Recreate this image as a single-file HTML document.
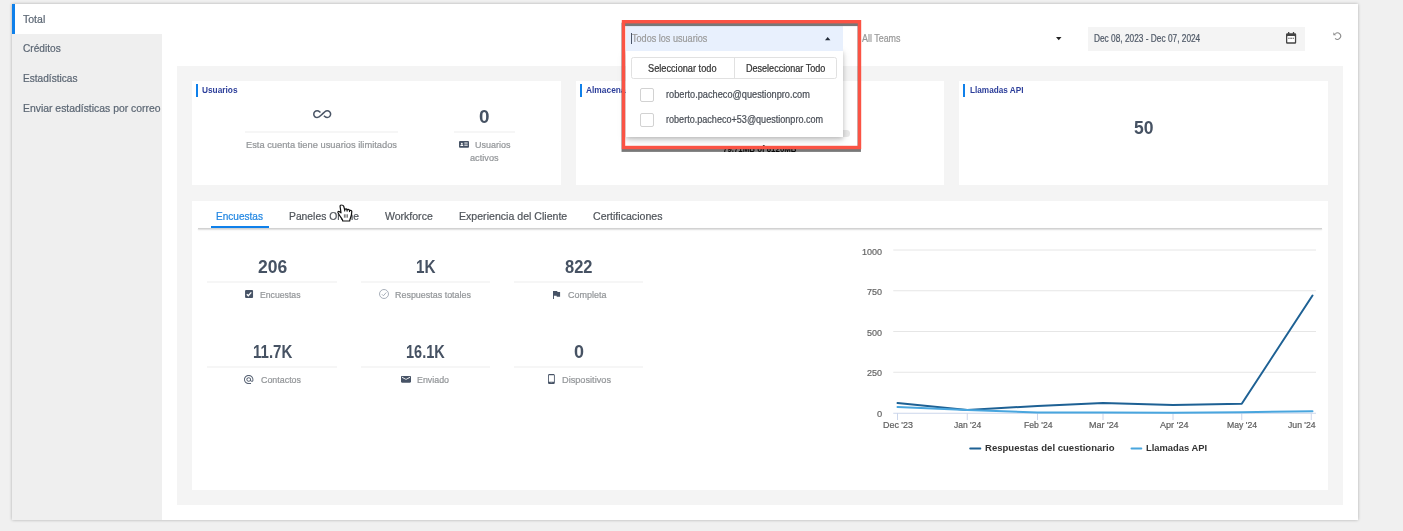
<!DOCTYPE html>
<html lang="es"><head><meta charset="utf-8"><title>Uso</title>
<style>
*{margin:0;padding:0;box-sizing:border-box}
html,body{width:1403px;height:531px;overflow:hidden;background:#f0f0f0;font-family:"Liberation Sans",sans-serif}
.a{position:absolute}
.t{position:absolute;white-space:nowrap;transform-origin:0 50%;display:block;-webkit-text-stroke:.22px currentColor}
#panel{left:12px;top:4px;width:1346px;height:516px;background:#fff;box-shadow:0 0 3px rgba(0,0,0,.28)}
#side{left:12px;top:34px;width:149.6px;height:486px;background:#efefef}
#sel{left:12px;top:4px;width:3px;height:30px;background:#0f80ea}
#content{left:177px;top:66px;width:1166px;height:439px;background:#f4f4f4}
.card{background:#fff}
.bar{width:2px;height:13px;background:#0f80ea;top:84px}
.dv{height:2px;background:#f6f6f6}
svg{position:absolute;overflow:visible}
</style></head><body>
<div class="a" id="panel"></div>
<div class="a" id="side"></div>
<div class="a" id="sel"></div>
<div class="a" id="content"></div>
<div class="a card" style="left:192px;top:80.5px;width:368.5px;height:104.5px"></div>
<div class="a card" style="left:575.75px;top:80.5px;width:368px;height:104.5px"></div>
<div class="a card" style="left:959.25px;top:80.5px;width:368.75px;height:104.5px"></div>
<div class="a card" style="left:192px;top:200.5px;width:1136px;height:289.5px"></div>
<div class="a bar" style="left:195.5px"></div>
<div class="a bar" style="left:579.5px"></div>
<div class="a bar" style="left:962.5px"></div>

<!-- users card -->
<div class="a dv" style="left:245px;top:131px;width:153px"></div>
<div class="a dv" style="left:453.5px;top:131px;width:61px"></div>
<!-- storage progress (mostly hidden) -->
<div class="a" style="left:670px;top:130px;width:179.5px;height:7px;border-radius:4px;background:#e9e9e9"></div>

<!-- tabs -->
<div class="a" style="left:197.5px;top:228px;width:1124.5px;height:1px;background:#d2d2d2;box-shadow:0 1px 1.5px rgba(0,0,0,.18)"></div>
<div class="a" style="left:210.75px;top:226.25px;width:58px;height:1.9px;background:#0f80ea"></div>

<!-- stat dividers -->
<div class="a dv" style="left:207px;top:281px;width:130px"></div>
<div class="a dv" style="left:360.5px;top:281px;width:129.5px"></div>
<div class="a dv" style="left:513.75px;top:281px;width:129.5px"></div>
<div class="a dv" style="left:207px;top:366px;width:130px"></div>
<div class="a dv" style="left:360.5px;top:366px;width:129.5px"></div>
<div class="a dv" style="left:513.75px;top:366px;width:129.5px"></div>

<!-- date input -->
<div class="a" style="left:1087.5px;top:26.75px;width:217.5px;height:24px;background:#f4f4f4"></div>

<!-- chart -->
<svg class="a" style="left:0;top:0" width="1403" height="531" viewBox="0 0 1403 531">
 <g stroke="#e6e6e6" stroke-width="1" fill="none">
  <path d="M893.25 250H1316M893.25 290.75H1316M893.25 331.5H1316M893.25 372.25H1316"/>
 </g>
 <path d="M893.25 413.25H1316" stroke="#ccd6eb" stroke-width="1" fill="none"/>
 <path d="M897.5 413v7M967.25 413v7M1037.5 413v7M1103 413v7M1173 413v7M1241.75 413v7M1311.25 413v7" stroke="#ccd6eb" stroke-width="1" fill="none"/>
 <path d="M897.5 403L967.25 410L1037.5 406L1103 403L1173 405L1241.75 403.75L1312.5 295.5" stroke="#1e6194" stroke-width="2" fill="none" stroke-linejoin="round" stroke-linecap="round"/>
 <path d="M897.5 407L967.25 410L1037.5 412.4L1103 412.5L1173 412.75L1241.75 412.25L1312.5 411.25" stroke="#49a6de" stroke-width="2" fill="none" stroke-linejoin="round" stroke-linecap="round"/>
 <path d="M970.2 448.400H980.300" stroke="#1e6194" stroke-width="2" stroke-linecap="round"/>
 <path d="M1131.500 448.400H1141.300" stroke="#49a6de" stroke-width="2" stroke-linecap="round"/>
</svg>

<!--ICONS_START-->
<!-- infinity -->
<svg style="left:312.9px;top:109.9px" width="18.4" height="8.25" viewBox="0 6.62 24 10.76" preserveAspectRatio="none"><path fill="#4a5566" d="M18.6 6.62c-1.44 0-2.8.56-3.77 1.53L12 10.66 10.48 12h.01L7.8 14.39c-.64.64-1.49.99-2.4.99-1.87 0-3.39-1.51-3.39-3.38S3.53 8.62 5.4 8.62c.91 0 1.76.35 2.44 1.03l1.13 1 1.51-1.34L9.22 8.2C8.2 7.18 6.84 6.62 5.4 6.62 2.42 6.62 0 9.04 0 12s2.42 5.38 5.4 5.38c1.44 0 2.8-.56 3.77-1.53l2.83-2.5.01.01L13.52 12h-.01l2.69-2.39c.64-.64 1.49-.99 2.4-.99 1.87 0 3.39 1.51 3.39 3.38s-1.52 3.38-3.39 3.38c-.9 0-1.76-.35-2.44-1.03l-1.14-1.01-1.51 1.34 1.27 1.12c1.02 1.01 2.37 1.57 3.82 1.57 2.98 0 5.4-2.41 5.4-5.38s-2.42-5.37-5.4-5.37z"/></svg>
<!-- id card -->
<svg style="left:458.8px;top:140.9px" width="10" height="6.7" viewBox="0 0 30 20"><rect x="0" y="0" width="30" height="20" rx="3" fill="#475366"/><circle cx="8.5" cy="7.5" r="2.6" fill="#fff"/><path d="M4 15c0-3 2-4.5 4.500-4.500S13 12 13 15z" fill="#fff"/><rect x="16" y="4.500" width="10" height="3" fill="#fff"/><rect x="16" y="11" width="10" height="3" fill="#fff"/></svg>
<!-- checkbox -->
<svg style="left:244.8px;top:290px" width="8.1" height="8" viewBox="0 0 16 16"><rect width="16" height="16" rx="2" fill="#475366"/><path d="M3.500 8.500l3 3L12.500 4.800" stroke="#fff" stroke-width="2.600" fill="none"/></svg>
<!-- circle check -->
<svg style="left:379.1px;top:289.1px" width="10" height="10" viewBox="0 0 20 20"><circle cx="10" cy="10" r="9" fill="none" stroke="#98a1ae" stroke-width="1.700"/><path d="M5.800 10.500l3 3L14.500 7" stroke="#98a1ae" stroke-width="1.700" fill="none"/></svg>
<!-- flag -->
<svg style="left:552.9px;top:290.9px" width="7.100" height="8" viewBox="5 4 15 17" preserveAspectRatio="none"><path fill="#475366" d="M14.400 6L14 4H5v17h2v-7h5.600l.4 2h7V6z"/></svg>
<!-- at -->
<svg style="left:244.4px;top:375px" width="9.400" height="9" viewBox="2 2 20 20" preserveAspectRatio="none"><path fill="#596475" d="M12 2C6.480 2 2 6.480 2 12s4.480 10 10 10h5v-2h-5c-4.340 0-8-3.660-8-8s3.660-8 8-8 8 3.660 8 8v1.430c0 .79-.71 1.570-1.500 1.570s-1.500-.78-1.500-1.570V12c0-2.760-2.240-5-5-5s-5 2.240-5 5 2.240 5 5 5c1.380 0 2.640-.56 3.540-1.470.65.890 1.770 1.470 2.960 1.470 1.970 0 3.500-1.600 3.500-3.570V12c0-5.520-4.480-10-10-10zm0 13c-1.660 0-3-1.340-3-3s1.340-3 3-3 3 1.340 3 3-1.340 3-3 3z"/></svg>
<!-- envelope -->
<svg style="left:401.3px;top:375.6px" width="10" height="6.700" viewBox="2 4 20 16" preserveAspectRatio="none"><path fill="#475366" d="M20 4H4c-1.100 0-1.990.9-1.990 2L2 18c0 1.100.9 2 2 2h16c1.100 0 2-.9 2-2V6c0-1.100-.9-2-2-2zm0 4l-8 5-8-5V6l8 5 8-5v2z"/></svg>
<!-- phone -->
<svg style="left:547.7px;top:374px" width="6.800" height="10" viewBox="5 1 14 22" preserveAspectRatio="none"><path fill="#475366" d="M16 1H8C6.340 1 5 2.340 5 4v16c0 1.660 1.340 3 3 3h8c1.660 0 3-1.340 3-3V4c0-1.660-1.340-3-3-3zm-2 20h-4v-1h4v1zm3.250-3H6.750V4h10.500v14z"/></svg>
<!-- calendar -->
<svg style="left:1285.9px;top:32.2px" width="10.200" height="11.800" viewBox="0 0 20 23"><path fill="#444" d="M4 0h2.500v2.500h7V0H16v2.500h1.500A2.500 2.500 0 0 1 20 5v15.500a2.500 2.500 0 0 1-2.500 2.500h-15A2.500 2.500 0 0 1 0 20.500V5a2.500 2.500 0 0 1 2.500-2.500H4z"/><rect x="2.500" y="8" width="15" height="12" rx="1" fill="#fff"/><path d="M4.500 12h2.500M8.500 12h3M13 12h2.500" stroke="#444" stroke-width="2"/></svg>
<!-- reset -->
<svg style="left:0;top:0" width="1403" height="531" viewBox="0 0 1403 531"><path d="M1335.300 33.700A3.200 3.200 0 1 1 1335.100 38.300" fill="none" stroke="#8c8c8c" stroke-width="1.100"/><path d="M1333.300 32.300V35.300H1336.200z" fill="#909090"/></svg>
<!-- hand cursor -->
<svg style="left:0;top:0;z-index:5" width="1403" height="531" viewBox="0 0 1403 531"><path d="M341.500 205C340.500 204.900 340 205.700 340.100 206.600L341 212.900L339.600 211.700C338.800 211.100 337.700 211.400 337.900 212.400C338.200 213.500 340.400 216.600 342.500 219.800L342.700 221H349.700L349.900 219.700C350.900 217.600 351.800 214.500 351.800 211.600C351.800 210.200 350 209.900 349.500 210.900V210.300C349.300 209 347.300 209 347.100 210.200V209.900C346.800 208.600 344.900 208.700 344.700 209.900L343.700 206.200C343.400 205.300 342.500 205 341.500 205Z" fill="#fff" stroke="#111" stroke-width="1.200" stroke-linejoin="round"/><path d="M344.700 209.900v1.600M347.100 210.200v1.500M349.500 210.800v1.300" stroke="#111" stroke-width="1" fill="none"/><path d="M344.400 214.300v3.400M345.900 214.300v3.400M347.400 214.300v3.400" stroke="#222" stroke-width=".65" fill="none"/></svg>
<!--ICONS_END-->

<span id="t0" class="t" style="left:23px;top:13.00px;font-size:11.5px;line-height:13.8px;color:#5b6673;font-weight:400;transform:scaleX(0.9158);">Total</span>
<span id="t1" class="t" style="left:23px;top:42.00px;font-size:11.5px;line-height:13.8px;color:#5b6673;font-weight:400;transform:scaleX(0.8814);">Créditos</span>
<span id="t2" class="t" style="left:23px;top:72.00px;font-size:11.5px;line-height:13.8px;color:#5b6673;font-weight:400;transform:scaleX(0.8790);">Estadísticas</span>
<span id="t3" class="t" style="left:23px;top:102.00px;font-size:11.5px;line-height:13.8px;color:#5b6673;font-weight:400;transform:scaleX(0.9039);">Enviar estadísticas por correo</span>
<span id="t4" class="t" style="left:202px;top:84.00px;font-size:9.5px;line-height:11.4px;color:#2c3e9a;font-weight:700;transform:scaleX(0.8732);-webkit-text-stroke:0;">Usuarios</span>
<span id="t5" class="t" style="left:586px;top:84.00px;font-size:9.5px;line-height:11.4px;color:#2c3e9a;font-weight:700;transform:scaleX(0.8812);-webkit-text-stroke:0;">Almacenamiento</span>
<span id="t6" class="t" style="left:970px;top:84.00px;font-size:9.5px;line-height:11.4px;color:#2c3e9a;font-weight:700;transform:scaleX(0.8636);-webkit-text-stroke:0;">Llamadas API</span>
<span id="t7" class="t" style="left:478.5px;top:107.00px;font-size:18px;line-height:21.6px;color:#465263;font-weight:700;transform:scaleX(1.0484);-webkit-text-stroke:0;">0</span>
<span id="t8" class="t" style="left:1133.5px;top:118.00px;font-size:18px;line-height:21.6px;color:#465263;font-weight:700;transform:scaleX(0.9735);-webkit-text-stroke:0;">50</span>
<span id="t9" class="t" style="left:246px;top:139.00px;font-size:9.5px;line-height:11.4px;color:#939699;font-weight:400;transform:scaleX(0.9792);">Esta cuenta tiene usuarios ilimitados</span>
<span id="t10" class="t" style="left:474.9px;top:139.00px;font-size:9.5px;line-height:11.4px;color:#939699;font-weight:400;transform:scaleX(0.9440);">Usuarios</span>
<span id="t11" class="t" style="left:470.4px;top:152.00px;font-size:9.5px;line-height:11.4px;color:#939699;font-weight:400;transform:scaleX(0.9669);">activos</span>
<span id="t12" class="t" style="left:722.9px;top:143.00px;font-size:9.5px;line-height:11.4px;color:#111;font-weight:700;transform:scaleX(0.8286);-webkit-text-stroke:0;">79.71MB of 8120MB</span>
<span id="t13" class="t" style="left:861.75px;top:33.00px;font-size:10px;line-height:12.0px;color:#999;font-weight:400;transform:scaleX(0.8918);">All Teams</span>
<span id="t14" class="t" style="left:1093.75px;top:33.00px;font-size:10px;line-height:12.0px;color:#4f5967;font-weight:400;transform:scaleX(0.8309);">Dec 08, 2023 - Dec 07, 2024</span>
<span id="t15" class="t" style="left:216px;top:210.00px;font-size:11.5px;line-height:13.8px;color:#2186e2;font-weight:400;transform:scaleX(0.8752);">Encuestas</span>
<span id="t16" class="t" style="left:289px;top:210.00px;font-size:11.5px;line-height:13.8px;color:#50555b;font-weight:400;transform:scaleX(0.8974);">Paneles Online</span>
<span id="t17" class="t" style="left:384.75px;top:210.00px;font-size:11.5px;line-height:13.8px;color:#50555b;font-weight:400;transform:scaleX(0.9147);">Workforce</span>
<span id="t18" class="t" style="left:458.75px;top:210.00px;font-size:11.5px;line-height:13.8px;color:#50555b;font-weight:400;transform:scaleX(0.9203);">Experiencia del Cliente</span>
<span id="t19" class="t" style="left:593px;top:210.00px;font-size:11.5px;line-height:13.8px;color:#50555b;font-weight:400;transform:scaleX(0.9215);">Certificaciones</span>
<span id="t20" class="t" style="left:257.5px;top:257.00px;font-size:18px;line-height:21.6px;color:#465263;font-weight:700;transform:scaleX(0.9735);-webkit-text-stroke:0;">206</span>
<span id="t21" class="t" style="left:415.5px;top:257.00px;font-size:18px;line-height:21.6px;color:#465263;font-weight:700;transform:scaleX(0.8473);-webkit-text-stroke:0;">1K</span>
<span id="t22" class="t" style="left:565px;top:257.00px;font-size:18px;line-height:21.6px;color:#465263;font-weight:700;transform:scaleX(0.9152);-webkit-text-stroke:0;">822</span>
<span id="t23" class="t" style="left:252.5px;top:342.00px;font-size:18px;line-height:21.6px;color:#465263;font-weight:700;transform:scaleX(0.8343);-webkit-text-stroke:0;">11.7K</span>
<span id="t24" class="t" style="left:405.75px;top:342.00px;font-size:18px;line-height:21.6px;color:#465263;font-weight:700;transform:scaleX(0.8065);-webkit-text-stroke:0;">16.1K</span>
<span id="t25" class="t" style="left:573.5px;top:342.00px;font-size:18px;line-height:21.6px;color:#465263;font-weight:700;transform:scaleX(0.9984);-webkit-text-stroke:0;">0</span>
<span id="t26" class="t" style="left:260px;top:289.00px;font-size:9.5px;line-height:11.4px;color:#939699;font-weight:400;transform:scaleX(0.9127);">Encuestas</span>
<span id="t27" class="t" style="left:395px;top:289.00px;font-size:9.5px;line-height:11.4px;color:#939699;font-weight:400;transform:scaleX(0.9406);">Respuestas totales</span>
<span id="t28" class="t" style="left:567.5px;top:289.00px;font-size:9.5px;line-height:11.4px;color:#939699;font-weight:400;transform:scaleX(0.9466);">Completa</span>
<span id="t29" class="t" style="left:260.5px;top:374.00px;font-size:9.5px;line-height:11.4px;color:#939699;font-weight:400;transform:scaleX(0.9350);">Contactos</span>
<span id="t30" class="t" style="left:417px;top:374.00px;font-size:9.5px;line-height:11.4px;color:#939699;font-weight:400;transform:scaleX(0.9318);">Enviado</span>
<span id="t31" class="t" style="left:562px;top:374.00px;font-size:9.5px;line-height:11.4px;color:#939699;font-weight:400;transform:scaleX(0.9667);">Dispositivos</span>
<span id="t32" class="t" style="left:862.1px;top:246.00px;font-size:9.5px;line-height:11.4px;color:#666;font-weight:400;transform:scaleX(0.9460);">1000</span>
<span id="t33" class="t" style="left:867.1px;top:286.00px;font-size:9.5px;line-height:11.4px;color:#666;font-weight:400;transform:scaleX(0.9458);">750</span>
<span id="t34" class="t" style="left:867.1px;top:327.00px;font-size:9.5px;line-height:11.4px;color:#666;font-weight:400;transform:scaleX(0.9458);">500</span>
<span id="t35" class="t" style="left:867.1px;top:367.00px;font-size:9.5px;line-height:11.4px;color:#666;font-weight:400;transform:scaleX(0.9458);">250</span>
<span id="t36" class="t" style="left:876.9px;top:408.00px;font-size:9.5px;line-height:11.4px;color:#666;font-weight:400;transform:scaleX(0.9817);">0</span>
<span id="t37" class="t" style="left:882.8px;top:419.00px;font-size:9.5px;line-height:11.4px;color:#606060;font-weight:400;transform:scaleX(0.9398);">Dec '23</span>
<span id="t38" class="t" style="left:954px;top:419.00px;font-size:9.5px;line-height:11.4px;color:#606060;font-weight:400;transform:scaleX(0.8964);">Jan '24</span>
<span id="t39" class="t" style="left:1023.6px;top:419.00px;font-size:9.5px;line-height:11.4px;color:#606060;font-weight:400;transform:scaleX(0.9111);">Feb '24</span>
<span id="t40" class="t" style="left:1088.6px;top:419.00px;font-size:9.5px;line-height:11.4px;color:#606060;font-weight:400;transform:scaleX(0.9430);">Mar '24</span>
<span id="t41" class="t" style="left:1160px;top:419.00px;font-size:9.5px;line-height:11.4px;color:#606060;font-weight:400;transform:scaleX(0.9560);">Apr '24</span>
<span id="t42" class="t" style="left:1226.9px;top:419.00px;font-size:9.5px;line-height:11.4px;color:#606060;font-weight:400;transform:scaleX(0.9130);">May '24</span>
<span id="t43" class="t" style="left:1288px;top:419.00px;font-size:9.5px;line-height:11.4px;color:#606060;font-weight:400;transform:scaleX(0.9096);">Jun '24</span>
<span id="t44" class="t" style="left:985px;top:442.00px;font-size:9.5px;line-height:11.4px;color:#333;font-weight:700;transform:scaleX(1.0052);-webkit-text-stroke:0;">Respuestas del cuestionario</span>
<span id="t45" class="t" style="left:1146.25px;top:442.00px;font-size:9.5px;line-height:11.4px;color:#333;font-weight:700;transform:scaleX(0.9846);-webkit-text-stroke:0;">Llamadas API</span>

<!-- All teams caret -->
<svg style="left:1056.2px;top:37px" width="5.500" height="3.300" viewBox="0 0 7 3.500" preserveAspectRatio="none"><path d="M0 0h7L3.500 3.500z" fill="#222"/></svg>

<!-- dropdown -->
<div class="a" style="left:626px;top:50px;width:216.5px;height:86.9px;background:#fff;box-shadow:0 2px 4px rgba(0,0,0,.18),0 3px 9px rgba(0,0,0,.13)"></div>
<div class="a" style="left:626px;top:26px;width:216.8px;height:25px;background:#e8f0fd"></div>
<div class="a" style="left:631px;top:33px;width:1px;height:11px;background:#4a5568"></div>
<svg style="left:825px;top:37px" width="5.4" height="3.2" viewBox="0 0 7 3.5" preserveAspectRatio="none"><path d="M0 3.5h7L3.5 0z" fill="#222b38"/></svg>
<div class="a" style="left:631px;top:57px;width:206px;height:22px;border:1px solid #e1e1e1;border-radius:2.5px;background:#fff"></div>
<div class="a" style="left:733.5px;top:57px;width:1px;height:22px;background:#e1e1e1"></div>
<div class="a" style="left:640px;top:88px;width:13.5px;height:13.5px;border:1px solid #d2d2d2;border-radius:2px;background:#fff"></div>
<div class="a" style="left:640px;top:113.25px;width:13.5px;height:13.5px;border:1px solid #d2d2d2;border-radius:2px;background:#fff"></div>
<span id="d0" class="t" style="left:632px;top:32.00px;font-size:10.5px;line-height:12.6px;color:#9a9a9a;font-weight:400;transform:scaleX(0.8658);">Todos los usuarios</span>
<span id="d1" class="t" style="left:648.25px;top:63.00px;font-size:10px;line-height:12.0px;color:#333;font-weight:400;transform:scaleX(0.9195);">Seleccionar todo</span>
<span id="d2" class="t" style="left:745.75px;top:63.00px;font-size:10px;line-height:12.0px;color:#333;font-weight:400;transform:scaleX(0.9041);">Deseleccionar Todo</span>
<span id="d3" class="t" style="left:665.8px;top:89.00px;font-size:10px;line-height:12.0px;color:#4a4f57;font-weight:400;transform:scaleX(0.9203);">roberto.pacheco@questionpro.com</span>
<span id="d4" class="t" style="left:665.8px;top:114.00px;font-size:10px;line-height:12.0px;color:#4a4f57;font-weight:400;transform:scaleX(0.9064);">roberto.pacheco+53@questionpro.com</span>
<!-- red highlight box -->
<svg class="a" style="left:0;top:0" width="1403" height="531" viewBox="0 0 1403 531">
 <defs><filter id="bl" x="-5%" y="-5%" width="110%" height="110%"><feGaussianBlur stdDeviation="0.550"/></filter></defs>
 <rect x="623.250" y="24.400" width="236" height="125.800" fill="none" stroke="#000" stroke-opacity=".53" stroke-width="3.4" filter="url(#bl)"/>
 <rect x="623.5" y="21.7" width="236" height="125.8" fill="none" stroke="#fb5344" stroke-width="3.4"/>
</svg>
</body></html>
